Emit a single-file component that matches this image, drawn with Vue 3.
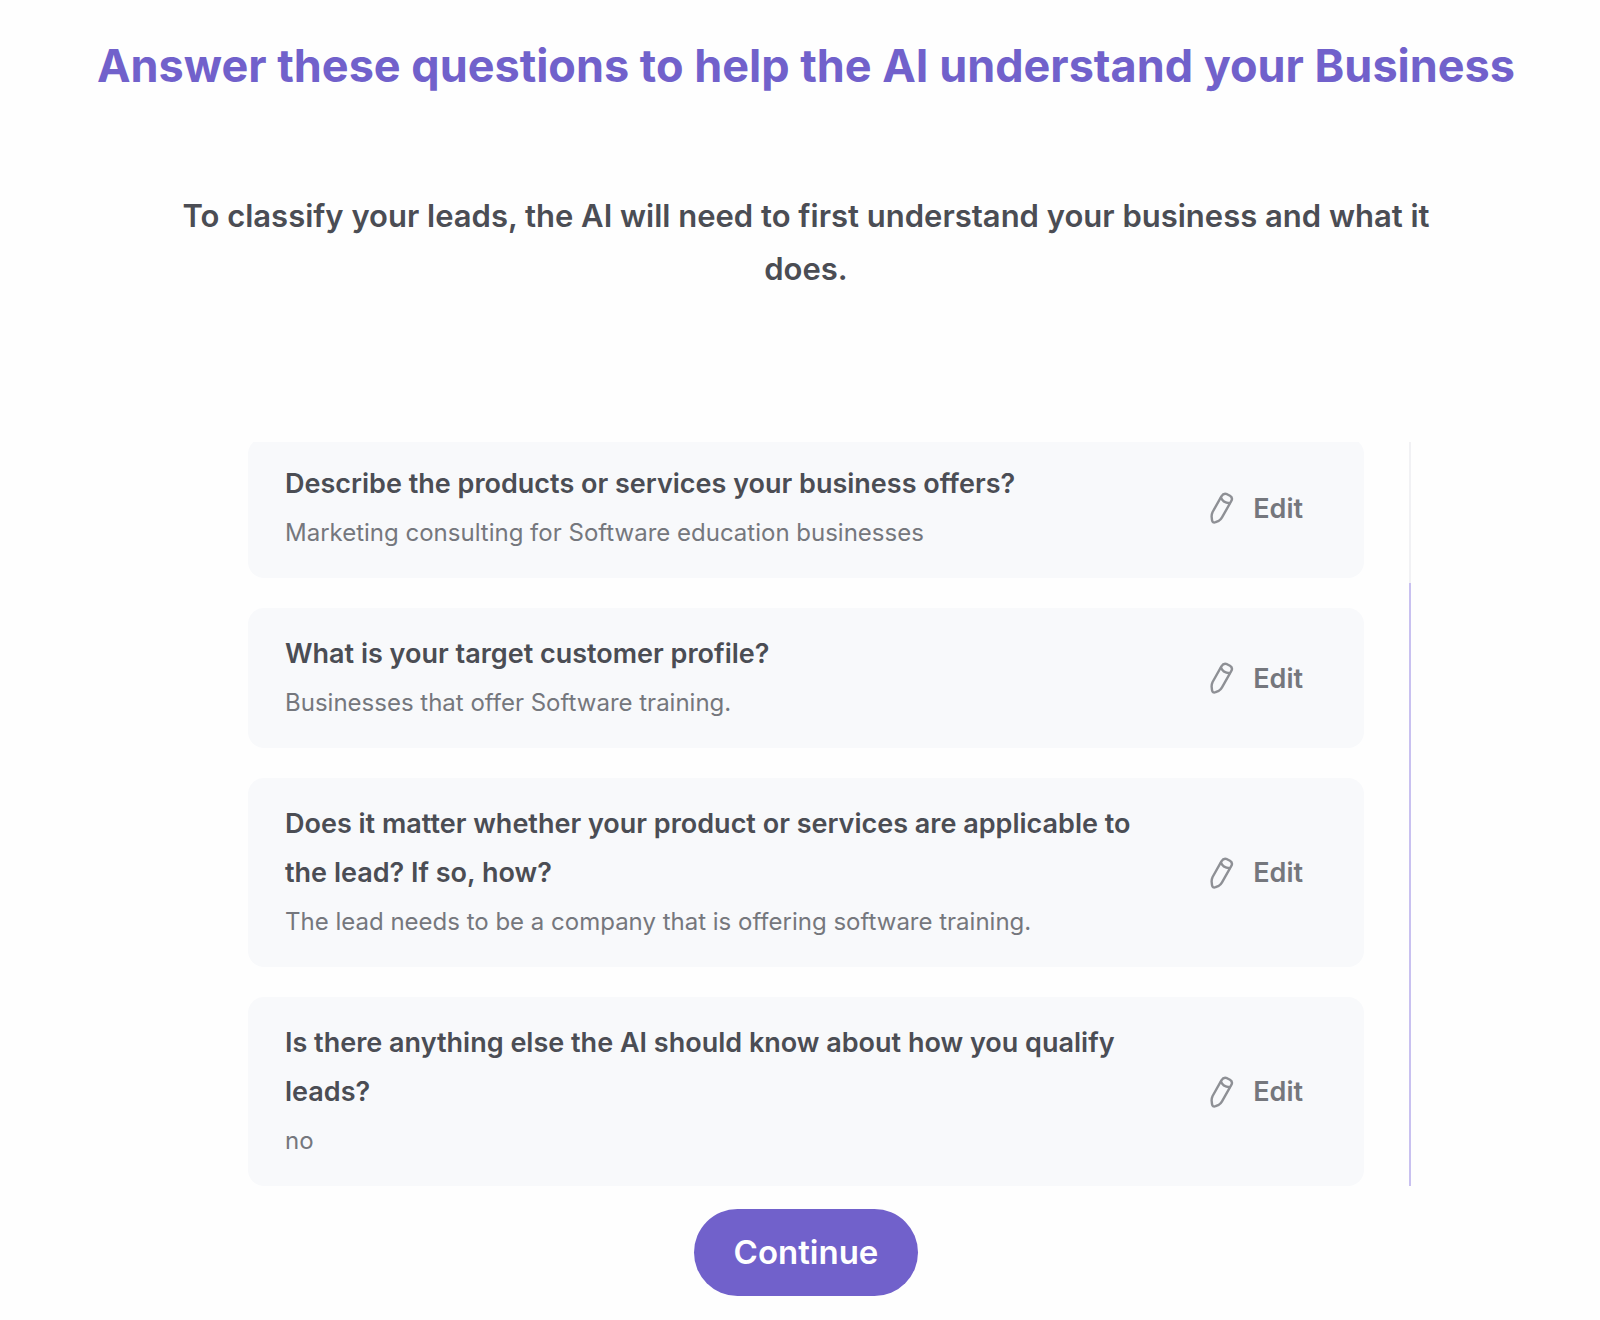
<template>
    <main class="page">
        <h1 class="heading">Answer these questions to help the AI understand your Business</h1>
        <p class="intro">To classify your leads, the AI will need to first understand your business and what it does.</p>

        <section class="questions">
            <div class="viewport">
                <ul class="list">
                    <li v-for="item in items" :key="item.question" class="card">
                        <div class="card-text">
                            <h2 class="question">{{ item.question }}</h2>
                            <p class="answer">{{ item.answer }}</p>
                        </div>
                        <button type="button" class="edit">
                            <svg class="pencil" viewBox="0 0 24 32" fill="none" stroke="currentColor" stroke-width="2.4"
                                stroke-linejoin="round" stroke-linecap="round" aria-hidden="true">
                                <path d="M11.4 4.4 Q13.6 0.8 17 2.2 L20 3.8 Q23.2 5.8 21.2 9.2 L12 25.4 Q10.8 27.6 8.8 28.8 L5.6 30.2 Q2.4 31.2 2 28 L1.6 24.4 Q1.6 22.2 2.6 20 Z" />
                                <path d="M11 5.6 Q12.4 10.4 19.8 11.2" />
                            </svg>
                            <span>Edit</span>
                        </button>
                    </li>
                </ul>
            </div>
            <div class="track">
                <div class="thumb" :style="{ height: thumbHeight }"></div>
            </div>
        </section>

        <button type="button" class="continue">Continue</button>
    </main>
</template>

<script setup>
import { ref, computed } from 'vue';

const items = ref([
    {
        question: 'Describe the products or services your business offers?',
        answer: 'Marketing consulting for Software education businesses'
    },
    {
        question: 'What is your target customer profile?',
        answer: 'Businesses that offer Software training.'
    },
    {
        question: 'Does it matter whether your product or services are applicable to the lead? If so, how?',
        answer: 'The lead needs to be a company that is offering software training.'
    },
    {
        question: 'Is there anything else the AI should know about how you qualify leads?',
        answer: 'no'
    }
]);

const visibleShare = ref(0.81);
const thumbHeight = computed(() => `${visibleShare.value * 100}%`);
</script>

<style>
body {
    margin: 0;
    background: #fefefe;
}
</style>

<style scoped>
.page {
    display: flex;
    flex-direction: column;
    align-items: center;
    padding: 36px 60px 24px 72px;
    font-family: Inter, "Liberation Sans", sans-serif;
    font-variant-ligatures: none;
    color: #4b4d54;
}

.heading {
    margin: 0;
    font-size: 45px;
    line-height: 60px;
    font-weight: 700;
    text-align: center;
    color: #7161cb;
}

.intro {
    margin: 93px 88px 0;
    font-size: 31px;
    line-height: 53px;
    font-weight: 600;
    text-align: center;
}

.questions {
    display: flex;
    gap: 45px;
    align-self: stretch;
    margin: 147px 129px 0 176px;
}

.viewport {
    flex: 1;
    overflow: hidden;
}

.list {
    display: flex;
    flex-direction: column;
    gap: 30px;
    margin: -4px 0 0;
    padding: 0;
    list-style: none;
}

.card {
    display: flex;
    align-items: center;
    padding: 21px 61px 21px 37px;
    border-radius: 16px;
    background: #f8f9fb;
}

.card-text {
    flex: 1;
    padding-right: 52px;
}

.question,
.answer {
    margin: 0;
    line-height: 49px;
}

.question {
    font-size: 27px;
    font-weight: 600;
}

.answer {
    font-size: 24px;
    font-weight: 400;
    color: #75777d;
}

.edit {
    display: flex;
    align-items: center;
    gap: 19px;
    padding: 0;
    border: 0;
    background: none;
    font: inherit;
    font-size: 27px;
    font-weight: 600;
    color: #75777d;
    cursor: pointer;
}

.pencil {
    width: 24px;
    height: 32px;
    color: #8e9095;
}

.track {
    display: flex;
    flex-direction: column;
    justify-content: flex-end;
    width: 2px;
    background: #f1f1f4;
}

.thumb {
    background: #c9c1f0;
}

.continue {
    margin-top: 23px;
    padding: 0 40px;
    border: 0;
    border-radius: 44px;
    background: #7161cb;
    font: inherit;
    font-size: 33px;
    line-height: 87px;
    font-weight: 600;
    color: #fff;
    cursor: pointer;
}
</style>
